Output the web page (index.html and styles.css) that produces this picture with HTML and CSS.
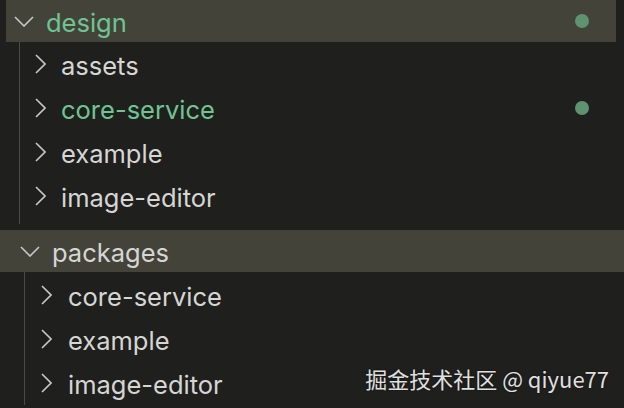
FILE: index.html
```html
<!DOCTYPE html>
<html>
<head>
<meta charset="utf-8">
<link rel="stylesheet" href="styles.css">
</head>
<body>
<div class="tree">
  <section class="group group-design">
    <div class="row head">
      <svg class="chev down" viewBox="0 0 20 11"><path d="M1 1 L10 10 L19 1"/></svg>
      <span class="label green">design</span>
      <span class="dot"></span>
    </div>
    <div class="children">
      <div class="row"><svg class="chev right" viewBox="0 0 11 20"><path d="M1 1 L10 10 L1 19"/></svg><span class="label">assets</span></div>
      <div class="row"><svg class="chev right" viewBox="0 0 11 20"><path d="M1 1 L10 10 L1 19"/></svg><span class="label green">core-service</span><span class="dot"></span></div>
      <div class="row"><svg class="chev right" viewBox="0 0 11 20"><path d="M1 1 L10 10 L1 19"/></svg><span class="label">example</span></div>
      <div class="row"><svg class="chev right" viewBox="0 0 11 20"><path d="M1 1 L10 10 L1 19"/></svg><span class="label">image-editor</span></div>
    </div>
  </section>
  <section class="group group-packages">
    <div class="row head">
      <svg class="chev down" viewBox="0 0 20 11"><path d="M1 1 L10 10 L19 1"/></svg>
      <span class="label">packages</span>
    </div>
    <div class="children">
      <div class="row"><svg class="chev right" viewBox="0 0 11 20"><path d="M1 1 L10 10 L1 19"/></svg><span class="label">core-service</span></div>
      <div class="row"><svg class="chev right" viewBox="0 0 11 20"><path d="M1 1 L10 10 L1 19"/></svg><span class="label">example</span></div>
      <div class="row"><svg class="chev right" viewBox="0 0 11 20"><path d="M1 1 L10 10 L1 19"/></svg><span class="label">image-editor</span></div>
    </div>
    <div class="watermark">掘金技术社区 @ qiyue77</div>
  </section>
</div>
</body>
</html>
```
FILE: styles.css
```css
html, body {
  margin: 0;
  padding: 0;
  background: #1f1f1d;
  width: 624px;
  height: 408px;
  overflow: hidden;
}
.tree {
  font-family: Inter, "Open Sans", sans-serif;
  font-size: 25.5px;
  color: #d6d6d4;
}
.group { position: relative; }
.group-design { margin: 0 8px 0 6px; }
.row {
  display: flex;
  align-items: center;
  height: 44px;
}
.head {
  height: 42px;
  background: #43433a;
}
.chev {
  fill: none;
  stroke: #c8c8c6;
  stroke-width: 1.6;
  flex: none;
}
.chev.down { width: 20px; height: 11px; }
.chev.right { width: 11px; height: 20px; }
.label { line-height: 1; padding-top: 3px; }
.green { color: #6fc493; }
.dot {
  margin-left: auto;
  width: 14px;
  height: 14px;
  border-radius: 50%;
  background: #5e9270;
}
.group-design .head { padding: 0 27px 0 8px; }
.group-design .head .chev { margin-right: 12px; }
.group-design .children {
  margin-left: 13px;
  border-left: 1.5px solid #4a4a47;
  padding-bottom: 6px;
}
.group-design .children .row { padding: 0 27px 0 15px; }
.group-design .children .chev { margin-right: 15px; }
.group-packages { margin-top: 6px; }
.group-packages .head { padding: 0 0 0 20px; }
.group-packages .head .chev { margin-right: 12px; }
.group-packages .children {
  margin-left: 24px;
  border-left: 1.5px solid #4a4a47;
  padding-top: 1px;
}
.group-packages .children .row { padding-left: 16px; }
.group-packages .children .chev { margin-right: 16px; }
.watermark {
  position: absolute;
  right: 15px;
  bottom: 16px;
  font-family: "Noto Sans CJK SC", "Open Sans", sans-serif;
  font-size: 22px;
  color: #e0e0e0;
  text-shadow: 0 0 2px rgba(0,0,0,0.6);
  line-height: 1;
}
```
